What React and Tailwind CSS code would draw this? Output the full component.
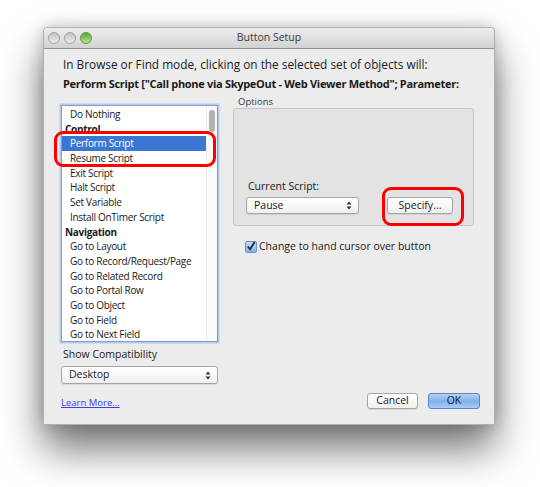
import React from 'react'

const font = { fontFamily: '"Open Sans", "DejaVu Sans", sans-serif' }

const items = [
  { t: 'Do Nothing' },
  { t: 'Control', h: true },
  { t: 'Perform Script', sel: true },
  { t: 'Resume Script' },
  { t: 'Exit Script' },
  { t: 'Halt Script' },
  { t: 'Set Variable' },
  { t: 'Install OnTimer Script' },
  { t: 'Navigation', h: true },
  { t: 'Go to Layout' },
  { t: 'Go to Record/Request/Page' },
  { t: 'Go to Related Record' },
  { t: 'Go to Portal Row' },
  { t: 'Go to Object' },
  { t: 'Go to Field' },
  { t: 'Go to Next Field' },
]

const Arrows = () => (
  <svg width="6" height="9" viewBox="0 0 6 9" className="shrink-0">
    <path d="M0.5 3.5 L3 0.5 L5.5 3.5 Z" fill="#333" />
    <path d="M0.5 5.5 L3 8.5 L5.5 5.5 Z" fill="#333" />
  </svg>
)

const Popup = ({ label, className }) => (
  <div className={`flex items-center justify-between rounded-[3px] border border-[#a5a5a5] bg-gradient-to-b from-white to-[#f0f0f0] pl-[7px] pr-[6px] text-[10.5px] text-[#1a1a1a] shadow-[0_1px_0_rgba(0,0,0,0.08)] ${className}`}>
    <span>{label}</span>
    <Arrows />
  </div>
)

const Button = ({ label, className }) => (
  <div className={`flex items-center justify-center rounded-[3px] border border-[#a5a5a5] bg-gradient-to-b from-white to-[#f0f0f0] text-[10.5px] text-[#1a1a1a] shadow-[0_1px_0_rgba(0,0,0,0.08)] ${className}`}>
    {label}
  </div>
)

export default function App() {
  return (
    <div className="w-[540px] h-[487px] bg-white pl-[43px] pt-[27px] overflow-hidden" style={font}>
      <div className="relative w-[452px] h-[398px] bg-[#ececec] border border-[#b0b0b0] rounded-t-[4px] shadow-[0_24px_40px_rgba(0,0,0,0.55),0_0_16px_rgba(0,0,0,0.2)] flex flex-col">
        {/* title bar */}
        <div className="relative h-[21px] flex items-center justify-center rounded-t-[4px] bg-gradient-to-b from-[#ededed] to-[#d2d2d2] border-b border-[#8f8f8f]">
          <div className="absolute left-[4px] top-[4px] flex gap-[4px]">
            <div className="w-[12px] h-[12px] rounded-full bg-gradient-to-b from-[#c4c4c4] to-[#ebebeb] border border-[#a3a3a3]" />
            <div className="w-[12px] h-[12px] rounded-full bg-gradient-to-b from-[#c4c4c4] to-[#ebebeb] border border-[#a3a3a3]" />
            <div className="w-[12px] h-[12px] rounded-full bg-gradient-to-b from-[#58a83a] to-[#b6e48c] border border-[#5b9a3c]" />
          </div>
          <span className="text-[10.5px] text-[#3a3a3a]">Button Setup</span>
        </div>

        <div className="flex-1 flex flex-col px-[17px] pt-[8px]">
          <div className="ml-[2px] h-[14px] leading-[14px] text-[11.8px] text-[#1a1a1a] whitespace-nowrap">
            In Browse or Find mode, clicking on the selected set of objects will:
          </div>
          <div className="ml-[2px] mt-[6px] h-[14px] leading-[14px] text-[11px] tracking-[-0.3px] font-bold text-[#1a1a1a] whitespace-nowrap">
            Perform Script ["Call phone via SkypeOut - Web Viewer Method"; Parameter:
          </div>

          <div className="mt-[4px] flex gap-[15px]">
            {/* left column */}
            <div className="w-[157px] pt-[10px] flex flex-col">
              <div className="relative h-[237px] bg-white border border-[#7d9fd3] shadow-[0_0_0_1.5px_#b3cbeb] overflow-hidden">
                <div className="pt-[1px] pr-[11px]">
                  {items.map((it, i) => (
                    <div
                      key={i}
                      className={`h-[14.7px] leading-[14.7px] text-[10px] tracking-[-0.3px] whitespace-nowrap ${it.h ? 'pl-[3px] font-bold' : 'pl-[8px]'} ${it.sel ? 'bg-[#3a77d5] text-white' : 'text-[#1a1a1a]'}`}
                    >
                      {it.t}
                    </div>
                  ))}
                </div>
                {/* scrollbar */}
                <div className="absolute right-0 top-0 bottom-0 w-[11px] bg-[#fafafa] border-l border-[#ececec]">
                  <div className="mx-auto mt-[4px] w-[6px] h-[22px] rounded-full bg-[#b3b3b3]" />
                </div>
              </div>
              <div className="mt-[5px] ml-[2px] h-[14px] leading-[14px] text-[10.5px] text-[#1a1a1a]">Show Compatibility</div>
              <Popup label="Desktop" className="mt-[5px] h-[18px]" />
            </div>

            {/* right column */}
            <div className="w-[241px] flex flex-col">
              <div className="ml-[5px] h-[13px] leading-[13px] text-[9.5px] text-[#3a3a3a]">Options</div>
              <div className="h-[118px] rounded-[3px] border border-[#c6c6c6] bg-[#e3e3e3] flex flex-col justify-end px-[12px] pb-[11px]">
                <div className="ml-[2px] h-[14px] leading-[14px] text-[10.5px] text-[#1a1a1a]">Current Script:</div>
                <div className="mt-[4px] flex items-center justify-between">
                  <Popup label="Pause" className="w-[113px] h-[17px]" />
                  <Button label="Specify..." className="mr-[8px] w-[66px] h-[17px]" />
                </div>
              </div>
              <div className="mt-[13px] ml-[12px] flex items-center gap-[2px]">
                <div className="w-[12px] h-[12px] rounded-[2px] border border-[#6f8fc0] bg-gradient-to-b from-[#c9dcf5] to-[#8ab1e8] flex items-center justify-center">
                  <svg width="11" height="11" viewBox="0 0 11 11">
                    <path d="M2 5.5 L4.5 8.5 L9.5 0.5" stroke="#1b2a44" strokeWidth="2" fill="none" />
                  </svg>
                </div>
                <span className="text-[10.5px] text-[#1a1a1a]">Change to hand cursor over button</span>
              </div>
            </div>
          </div>

          <div className="mt-auto mb-[14px] flex items-center justify-between">
            <span className="mt-[4px] text-[9.5px] text-[#3b3bf5] underline">Learn More...</span>
            <div className="flex gap-[10px] mr-[-3px]">
              <Button label="Cancel" className="w-[51px] h-[16px]" />
              <div className="w-[52px] h-[16px] flex items-center justify-center rounded-[3px] border border-[#5a85c4] bg-gradient-to-b from-[#b9d4f5] via-[#7fb0ec] to-[#a8ccf5] text-[10.5px] text-[#1a1a1a]">OK</div>
            </div>
          </div>
        </div>

        {/* annotation outlines */}
        <div className="absolute left-[10px] top-[103px] w-[162px] h-[36px] rounded-[9px] border-[3px] border-[#ff0000]" />
        <div className="absolute left-[338px] top-[159px] w-[82px] h-[39px] rounded-[9px] border-[3px] border-[#ff0000]" />
      </div>
    </div>
  )
}
